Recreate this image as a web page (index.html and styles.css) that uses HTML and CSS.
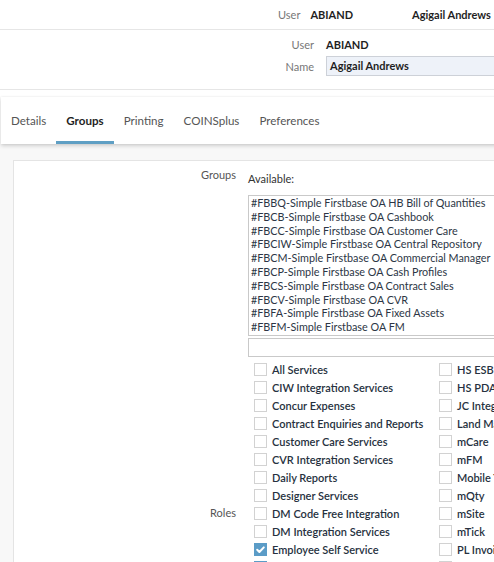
FILE: index.html
```html
<!DOCTYPE html>
<html>
<head>
<meta charset="utf-8">
<link rel="stylesheet" href="styles.css">
</head>
<body>
<div class="page">
  <header class="topbar">
    <span class="top-label">User</span>
    <span class="top-code">ABIAND</span>
    <span class="top-name">Agigail Andrews</span>
  </header>

  <section class="userinfo">
    <div class="form-row">
      <span class="form-label">User</span>
      <span class="form-value">ABIAND</span>
    </div>
    <div class="form-row">
      <span class="form-label">Name</span>
      <div class="form-input">Agigail Andrews</div>
    </div>
  </section>

  <nav class="tabs">
    <a class="tab">Details</a>
    <a class="tab active">Groups</a>
    <a class="tab">Printing</a>
    <a class="tab">COINSplus</a>
    <a class="tab">Preferences</a>
  </nav>

  <main class="content">
    <div class="panel">
      <div class="field groups-field">
        <div class="field-label">Groups</div>
        <div class="field-body">
          <div class="avail">Available:</div>
          <div class="listbox">
            <div>#FBBQ-Simple Firstbase OA HB Bill of Quantities</div>
            <div>#FBCB-Simple Firstbase OA Cashbook</div>
            <div>#FBCC-Simple Firstbase OA Customer Care</div>
            <div>#FBCIW-Simple Firstbase OA Central Repository</div>
            <div>#FBCM-Simple Firstbase OA Commercial Manager</div>
            <div>#FBCP-Simple Firstbase OA Cash Profiles</div>
            <div>#FBCS-Simple Firstbase OA Contract Sales</div>
            <div>#FBCV-Simple Firstbase OA CVR</div>
            <div>#FBFA-Simple Firstbase OA Fixed Assets</div>
            <div>#FBFM-Simple Firstbase OA FM</div>
          </div>
          <div class="filterbox"></div>
        </div>
      </div>

      <div class="field roles-field">
        <div class="field-label">Roles</div>
        <div class="roles">
          <label class="role"><span class="cb"></span>All Services</label>
          <label class="role"><span class="cb"></span>CIW Integration Services</label>
          <label class="role"><span class="cb"></span>Concur Expenses</label>
          <label class="role"><span class="cb"></span>Contract Enquiries and Reports</label>
          <label class="role"><span class="cb"></span>Customer Care Services</label>
          <label class="role"><span class="cb"></span>CVR Integration Services</label>
          <label class="role"><span class="cb"></span>Daily Reports</label>
          <label class="role"><span class="cb"></span>Designer Services</label>
          <label class="role"><span class="cb"></span>DM Code Free Integration</label>
          <label class="role"><span class="cb"></span>DM Integration Services</label>
          <label class="role"><span class="cb checked"><svg viewBox="0 0 13 13" width="13" height="13"><path d="M3.2 6.8 L5.4 9 L9.8 4.4" fill="none" stroke="#fff" stroke-width="2" stroke-linecap="round" stroke-linejoin="round"/></svg></span>Employee Self Service</label>
          <label class="role"><span class="cb checked"><svg viewBox="0 0 13 13" width="13" height="13"><path d="M3.2 6.8 L5.4 9 L9.8 4.4" fill="none" stroke="#fff" stroke-width="2" stroke-linecap="round" stroke-linejoin="round"/></svg></span>Enquiries</label>
          <label class="role"><span class="cb"></span>Expenses Services</label>
          <label class="role"><span class="cb"></span>Field Services</label>
          <label class="role"><span class="cb"></span>Finance Services</label>
          <label class="role"><span class="cb"></span>General Services</label>
          <label class="role"><span class="cb"></span>HR Services</label>

          <label class="role"><span class="cb"></span>HS ESB</label>
          <label class="role"><span class="cb"></span>HS PDA</label>
          <label class="role"><span class="cb"></span>JC Integration Services</label>
          <label class="role"><span class="cb"></span>Land Management</label>
          <label class="role"><span class="cb"></span>mCare</label>
          <label class="role"><span class="cb"></span>mFM</label>
          <label class="role"><span class="cb"></span>Mobile Timesheets</label>
          <label class="role"><span class="cb"></span>mQty</label>
          <label class="role"><span class="cb"></span>mSite</label>
          <label class="role"><span class="cb"></span>mTick</label>
          <label class="role"><span class="cb"></span>PL Invoice Services</label>
          <label class="role"><span class="cb"></span>Plant Services</label>
          <label class="role"><span class="cb"></span>Purchasing Services</label>
          <label class="role"><span class="cb"></span>Sales Services</label>
          <label class="role"><span class="cb"></span>Stock Services</label>
          <label class="role"><span class="cb"></span>Timesheets</label>
          <label class="role"><span class="cb"></span>Workflow</label>
        </div>
      </div>
    </div>
  </main>
</div>
</body>
</html>
```
FILE: styles.css
```css
html, body {
  margin: 0;
  padding: 0;
  overflow: hidden;
  background: #ffffff;
}
body {
  font-family: Lato, "Liberation Sans", sans-serif;
  color: #222;
  width: 494px;
  height: 562px;
}
.page {
  width: 760px;
}

/* top bar */
.topbar {
  height: 30px;
  box-sizing: border-box;
  border-bottom: 1px solid #e6e6e6;
  display: flex;
  align-items: center;
  padding-left: 278px;
  font-size: 11px;
  padding-top: 5px;
  padding-bottom: 6px;
}
.top-label { color: #777; }
.top-code { margin-left: 10px; font-weight: 700; color: #1f1f1f; }
.top-name { margin-left: 59px; font-weight: 700; color: #1f1f1f; }

/* user info */
.userinfo {
  height: 60px;
  box-sizing: border-box;
  border-bottom: 1px solid #e6e6e6;
  padding-top: 6px;
  display: flex;
  flex-direction: column;
  gap: 4px;
}
.form-row {
  display: grid;
  grid-template-columns: 314px 1fr;
  column-gap: 12px;
  align-items: center;
  font-size: 11px;
  min-height: 16px;
}
.form-label {
  text-align: right;
  color: #777;
}
.form-value {
  font-weight: 700;
  color: #1f1f1f;
}
.form-input {
  height: 20px;
  box-sizing: border-box;
  border: 1px solid #cdd1d8;
  background: #eef2f9;
  padding-left: 3px;
  line-height: 18px;
  font-weight: 700;
  color: #1f1f1f;
}

/* tabs */
.tabs {
  margin-top: 7px;
  margin-left: 1px;
  height: 47px;
  background: #fff;
  box-shadow: 0 2px 4px rgba(0,0,0,0.16), 0 0 2px rgba(0,0,0,0.08);
  display: flex;
  position: relative;
  z-index: 1;
}
.tab {
  font-size: 11.6px;
  color: #555;
  padding: 0 10px;
  display: flex;
  align-items: center;
  box-sizing: border-box;
  border-bottom: 3px solid transparent;
  padding-top: 2px;
}
.tab.active {
  color: #1f1f1f;
  font-weight: 700;
  border-bottom-color: #5f9fc4;
}

/* content */
.content {
  background: #f8f8f8;
  padding: 16px 0 0 13px;
  height: 420px;
}
.panel {
  background: #fff;
  border: 1px solid #e4e4e4;
  padding-top: 6px;
  height: 600px;
}
.field {
  display: grid;
  grid-template-columns: 222px 1fr;
  column-gap: 12px;
}
.field-label {
  text-align: right;
  font-size: 11px;
  color: #555;
  line-height: 16px;
}
.avail {
  font-size: 11px;
  color: #333;
  line-height: 16px;
  padding-top: 4px;
}
.listbox {
  margin-top: 8px;
  border: 1px solid #c9c9c9;
  border-right: none;
  height: 141px;
  box-sizing: border-box;
  padding: 0 2px;
  font-size: 10.8px;
  line-height: 13.8px;
  color: #2c3645;
}
.filterbox {
  margin-top: 2px;
  height: 19px;
  box-sizing: border-box;
  border: 1px solid #c9c9c9;
  border-right: none;
}
.roles-field {
  margin-top: 3px;
  align-items: center;
}
.roles {
  display: grid;
  grid-auto-flow: column;
  grid-template-rows: repeat(17, 18px);
  grid-template-columns: 185px 200px;
  padding-left: 6px;
}
.role {
  display: flex;
  align-items: center;
  font-size: 11px;
  color: #263140;
  font-weight: 600;
  white-space: nowrap;
}
.cb {
  width: 13px;
  height: 13px;
  box-sizing: border-box;
  border: 1px solid #d2d2d2;
  background: #fff;
  margin-right: 5px;
  flex: none;
  display: block;
}
.cb svg { display: block; margin: -1px; }
.cb.checked {
  background: #5b9cc7;
  border-color: #5b9cc7;
}
```
